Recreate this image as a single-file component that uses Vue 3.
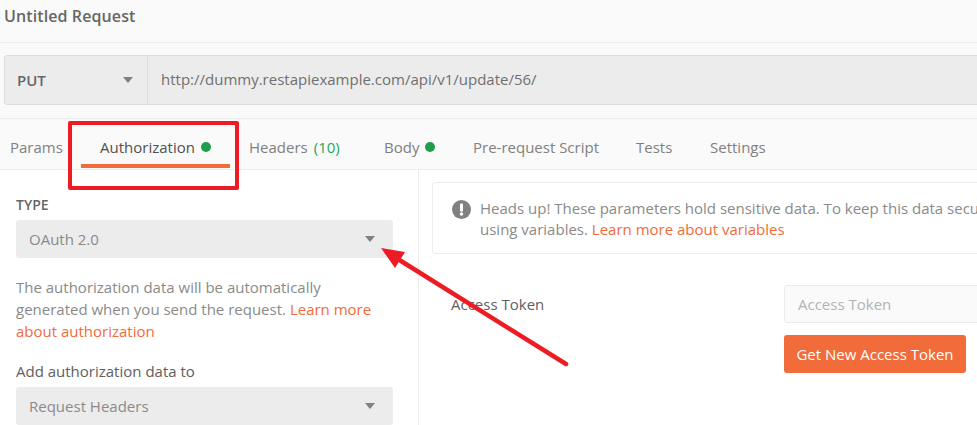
<script setup>
const tabs = [
  { label: 'Params', cls: 'params' },
  { label: 'Authorization', cls: 'auth', dot: true },
  { label: 'Headers', cls: 'headers', count: '(10)' },
  { label: 'Body', cls: 'body', dot: true },
  { label: 'Pre-request Script', cls: 'pre' },
  { label: 'Tests', cls: 'tests' },
  { label: 'Settings', cls: 'settings' },
]
</script>

<template>
  <div class="page">
    <header class="title-bar">Untitled Request</header>

    <section class="url-section">
      <div class="url-bar">
        <div class="method">
          <span>PUT</span>
          <i class="caret"></i>
        </div>
        <div class="url">http://dummy.restapiexample.com/api/v1/update/56/</div>
      </div>
    </section>

    <nav class="tabs">
      <div v-for="t in tabs" :key="t.label" class="tab" :class="t.cls">
        <span>{{ t.label }}</span>
        <span v-if="t.count" class="count">{{ t.count }}</span>
        <i v-if="t.dot" class="dot"></i>
      </div>
    </nav>

    <main class="content">
      <aside class="left">
        <div class="type-label">TYPE</div>
        <div class="select">
          <span>OAuth 2.0</span>
          <i class="caret"></i>
        </div>
        <p class="desc">
          The authorization data will be automatically generated when you send the request.
          <a>Learn more about authorization</a>
        </p>
        <div class="add-label">Add authorization data to</div>
        <div class="select">
          <span>Request Headers</span>
          <i class="caret"></i>
        </div>
      </aside>

      <section class="right">
        <div class="notice">
          <svg class="info" width="19" height="19" viewBox="0 0 19 19">
            <circle cx="9.5" cy="9.5" r="9.5" fill="#808080" />
            <rect x="8" y="3.5" width="3" height="8" rx="0.8" fill="#fff" />
            <circle cx="9.5" cy="14" r="1.7" fill="#fff" />
          </svg>
          <div class="notice-text">
            <div class="line">Heads up! These parameters hold sensitive data. To keep this data secure</div>
            <div class="line">using variables. <a>Learn more about variables</a></div>
          </div>
        </div>
        <div class="token-row">
          <label>Access Token</label>
          <div class="token-col">
            <div class="token-input">Access Token</div>
            <button class="get-token">Get New Access Token</button>
          </div>
        </div>
      </section>
    </main>

    <div class="highlight"></div>
    <svg class="arrow" width="977" height="425" viewBox="0 0 977 425">
      <line x1="566" y1="364" x2="393" y2="256" stroke="#ed1c24" stroke-width="4.5" stroke-linecap="round" />
      <polygon points="381,248 405,252 395,268" fill="#ed1c24" />
    </svg>
  </div>
</template>

<style>
html, body { margin: 0; background: #fff; overflow: hidden; }
</style>

<style scoped>
.page {
  position: relative;
  width: 977px;
  height: 425px;
  overflow: hidden;
  font-family: "Open Sans", sans-serif;
  font-size: 15px;
  color: #808080;
  background: #fff;
}
a { color: #f26b3a; }
.title-bar {
  box-sizing: border-box;
  height: 43px;
  padding: 5px 0 0 4px;
  background: #fafafa;
  border-bottom: 1px solid #ececec;
  font-size: 16px;
  font-weight: 600;
  letter-spacing: 0.1px;
  line-height: 22px;
  color: #666;
}
.url-section {
  box-sizing: border-box;
  height: 76px;
  padding: 12px 0 0 4px;
  background: #fafafa;
  border-bottom: 1px solid #ececec;
}
.url-bar {
  display: flex;
  box-sizing: border-box;
  width: 1000px;
  height: 50px;
  background: #ececec;
  border: 1px solid #dcdcdc;
  border-radius: 3px;
}
.method {
  display: flex;
  align-items: center;
  justify-content: space-between;
  box-sizing: border-box;
  width: 143px;
  padding: 0 14px 0 12px;
  border-right: 1px solid #dcdcdc;
  font-weight: 600;
  color: #666;
}
.url {
  padding-left: 13px;
  line-height: 47px;
  color: #707070;
}
.caret {
  display: block;
  width: 0;
  height: 0;
  border-left: 5px solid transparent;
  border-right: 5px solid transparent;
  border-top: 6px solid #808080;
}
.tabs {
  display: flex;
  box-sizing: border-box;
  height: 51px;
  background: #fafafa;
  border-bottom: 1px solid #ececec;
  color: #808080;
}
.tab {
  position: relative;
  display: flex;
  align-items: center;
  box-sizing: border-box;
  height: 50px;
  padding-top: 6px;
  white-space: nowrap;
}
.params { margin-left: 10px; width: 71px; }
.auth { width: 149px; padding-left: 19px; color: #505050; }
.auth::after {
  content: "";
  position: absolute;
  left: 0;
  right: 0;
  bottom: 1px;
  height: 4px;
  background: #f26b3a;
}
.headers { margin-left: 19px; width: 135px; }
.body { width: 89px; }
.pre { width: 163px; }
.tests { width: 74px; }
.count { margin-left: 6px; color: #26a65b; }
.dot {
  display: block;
  width: 10px;
  height: 10px;
  margin-left: 6px;
  border-radius: 50%;
  background: #1f9d4d;
}
.content { display: flex; height: 255px; }
.left {
  box-sizing: border-box;
  flex: none;
  width: 419px;
  padding: 26px 25px 0 16px;
  border-right: 1px solid #ececec;
}
.type-label {
  font-size: 14px;
  font-weight: 600;
  line-height: 18px;
  color: #666;
}
.select {
  display: flex;
  align-items: center;
  justify-content: space-between;
  box-sizing: border-box;
  height: 38px;
  margin-top: 6px;
  padding: 0 18px 0 13px;
  border-radius: 3px;
  background: #ececec;
  color: #8a8a8a;
}
.desc {
  margin: 18px 0 0;
  line-height: 22px;
  color: #8a8a8a;
}
.add-label {
  margin-top: 18px;
  line-height: 22px;
  color: #606060;
}
.add-label + .select { margin-top: 5px; }
.right { flex: 1; min-width: 0; padding: 12px 0 0 13px; }
.notice {
  display: flex;
  box-sizing: border-box;
  width: 900px;
  height: 72px;
  padding: 15px 0 0 19px;
  background: #fff;
  border: 1px solid #ececec;
  border-radius: 3px;
  color: #8a8a8a;
}
.info { flex: none; margin-top: 2px; }
.notice-text { margin-left: 9px; line-height: 22px; }
.line { white-space: nowrap; margin-top: -1px; }
.token-row { display: flex; margin-top: 31px; padding-left: 19px; }
.token-row label { flex: none; width: 333px; line-height: 38px; color: #606060; }
.token-input {
  box-sizing: border-box;
  width: 400px;
  height: 38px;
  padding-left: 13px;
  line-height: 36px;
  background: #fafafa;
  border: 1px solid #ececec;
  border-radius: 3px;
  color: #b3b3b3;
}
.get-token {
  display: block;
  box-sizing: border-box;
  width: 182px;
  height: 38px;
  margin-top: 12px;
  padding: 0;
  border: 0;
  border-radius: 3px;
  background: #f26b3a;
  color: #fff;
  font-family: inherit;
  font-size: 15px;
  font-weight: 500;
}
.highlight {
  position: absolute;
  left: 68px;
  top: 121px;
  box-sizing: border-box;
  width: 171px;
  height: 69px;
  border: 4px solid #ed1c24;
  border-radius: 2px;
}
.arrow { position: absolute; left: 0; top: 0; pointer-events: none; }
</style>
